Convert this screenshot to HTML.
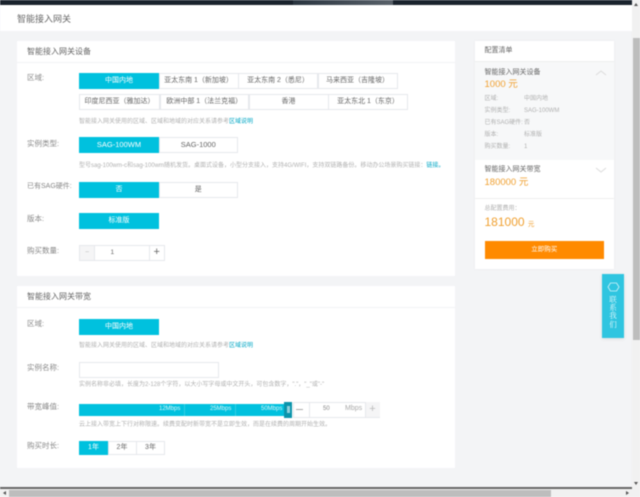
<!DOCTYPE html>
<html lang="zh"><head><meta charset="utf-8"><title>智能接入网关</title>
<style>
html,body{margin:0;padding:0;width:640px;height:497px;overflow:hidden;background:#f3f4f6}
body{position:relative;font-family:"Liberation Sans","Noto Sans CJK SC",sans-serif;color:#555}
#w{position:absolute;left:0;top:0;width:640px;height:497px;overflow:hidden;filter:blur(.45px)}
.a,.b,.t,.l,.h{position:absolute;box-sizing:border-box;white-space:nowrap}
.b{border:1px solid #e6e8ec;background:#fff;text-align:center;font-size:7px;line-height:14px;height:16px;color:#666}
.b.on{background:#00c1de;border-color:#00c1de;color:#fff}
.b.e{font-size:7.5px}
.l{left:27px;font-size:7.5px;line-height:10px;color:#888}
.h{left:79px;font-size:6px;line-height:8px;color:#b0b0b0}
.h i{font-style:normal;color:#00a6c4}
.t{font-size:8px;line-height:12px;color:#666}
.s{font-size:6px;line-height:9px;color:#b0b0b0}
.r{font-size:7px}
.p{font-size:9.5px;line-height:14px;color:#f0a030}
.m{font-size:6px;line-height:9px;color:#dff6fa}
</style></head><body><div id="w">
<div class="a" style="left:0;top:0;width:632px;height:5px;background:#1a232d"></div>
<div class="a" style="left:293px;top:0;width:100px;height:5px;background:linear-gradient(90deg,#2a3540,#59616a)"></div>
<div class="a" style="left:0;top:5px;width:632px;height:26px;background:#fff"></div>
<div class="t" style="left:17px;top:12.5px;font-size:9px">智能接入网关</div>

<div class="a" style="left:17px;top:41px;width:438px;height:235px;background:#fff"></div>
<div class="a" style="left:17px;top:61.5px;width:438px;height:1px;background:#f2f3f5"></div>
<div class="t" style="left:27px;top:45.5px">智能接入网关设备</div>
<div class="l" style="top:73px">区域:</div>
<div class="b on" style="left:79px;top:73px;width:80px">中国内地</div>
<div class="b" style="left:158.5px;top:73px;width:80px">亚太东南 1（新加坡）</div>
<div class="b" style="left:238px;top:73px;width:80px">亚太东南 2（悉尼）</div>
<div class="b" style="left:317.5px;top:73px;width:80px">马来西亚（吉隆坡）</div>
<div class="b" style="left:79px;top:94px;width:81px">印度尼西亚（雅加达）</div>
<div class="b" style="left:159.5px;top:94px;width:89.5px">欧洲中部 1（法兰克福）</div>
<div class="b" style="left:248.5px;top:94px;width:80px">香港</div>
<div class="b" style="left:328px;top:94px;width:80px">亚太东北 1（东京）</div>
<div class="h" style="top:118px">智能接入网关使用的区域、区域和地域的对应关系请参考<i>区域说明</i></div>
<div class="l" style="top:138.5px">实例类型:</div>
<div class="b on e" style="left:79px;top:137px;width:80px">SAG-100WM</div>
<div class="b e" style="left:158.5px;top:137px;width:79.5px">SAG-1000</div>
<div class="h" style="top:162px">型号sag-100wm-c和sag-100wm随机发货。桌面式设备，小型分支接入，支持4G/WIFI，支持双链路备份。移动办公场景购买链接：<i>链接。</i></div>
<div class="l" style="top:182px;font-size:7px">已有SAG硬件:</div>
<div class="b on" style="left:79px;top:181.5px;width:80px">否</div>
<div class="b" style="left:158.5px;top:181.5px;width:79.5px">是</div>
<div class="l" style="top:213.5px">版本:</div>
<div class="b on" style="left:79px;top:213px;width:80px">标准版</div>
<div class="l" style="top:245.5px">购买数量:</div>
<div class="b" style="left:79px;top:245px;width:86px"></div>
<div class="b" style="left:79px;top:245px;width:16px;background:#f5f5f6;color:#bbb;line-height:13px">−</div>
<div class="t" style="left:110.5px;top:247px;font-size:6.5px">1</div>
<div class="b" style="left:148.5px;top:245px;width:16.5px;font-size:11px;line-height:13px">+</div>

<div class="a" style="left:17px;top:286px;width:438px;height:181.5px;background:#fff"></div>
<div class="a" style="left:17px;top:307px;width:438px;height:1px;background:#f2f3f5"></div>
<div class="t" style="left:27px;top:290.5px">智能接入网关带宽</div>
<div class="l" style="top:318.5px">区域:</div>
<div class="b on" style="left:79px;top:318.5px;width:80px">中国内地</div>
<div class="h" style="top:342px">智能接入网关使用的区域、区域和地域的对应关系请参考<i>区域说明</i></div>
<div class="l" style="top:362.5px">实例名称:</div>
<div class="b" style="left:79px;top:362px;width:140px"></div>
<div class="h" style="top:381px">实例名称非必填，长度为2-128个字符，以大小写字母或中文开头，可包含数字，"."，"_"或"-"</div>
<div class="l" style="top:401.5px">带宽峰值:</div>
<div class="a" style="left:79px;top:403.5px;width:206px;height:12px;background:#00c1de"></div>
<div class="a" style="left:184px;top:403.5px;width:1px;height:12px;background:#33cde4"></div>
<div class="a" style="left:235px;top:403.5px;width:1px;height:12px;background:#33cde4"></div>
<div class="a m" style="left:159px;top:405px">12Mbps</div>
<div class="a m" style="left:210px;top:405px">25Mbps</div>
<div class="a m" style="left:261px;top:405px">50Mbps</div>
<div class="a" style="left:284px;top:401.5px;width:8px;height:16px;background:#0a94ab"></div>
<div class="a" style="left:286.5px;top:405.5px;width:3px;height:7px;background:#8fd0dc"></div>
<div class="b" style="left:293px;top:401.5px;width:87px;height:16px"></div>
<div class="a" style="left:296px;top:409px;width:7px;height:1px;background:#aaa"></div>
<div class="a" style="left:308.5px;top:402px;width:1px;height:15px;background:#e6e8ec"></div>
<div class="t" style="left:323px;top:405px;font-size:6px;line-height:9px;color:#888">50</div>
<div class="t" style="left:345px;top:404px;font-size:7px;line-height:10px;color:#aaa">Mbps</div>
<div class="a" style="left:364.5px;top:402px;width:15px;height:15px;background:#f5f5f6;border-left:1px solid #e6e8ec;color:#bbb;font-size:11px;line-height:14px;text-align:center">+</div>
<div class="h" style="top:421px">云上接入带宽上下行对称限速。续费变配时新带宽不是立即生效，而是在续费的周期开始生效。</div>
<div class="l" style="top:441px">购买时长:</div>
<div class="b on" style="left:79px;top:441px;width:29px;height:14px;line-height:12px">1年</div>
<div class="b" style="left:107.5px;top:441px;width:29px;height:14px;line-height:12px">2年</div>
<div class="b" style="left:136px;top:441px;width:29px;height:14px;line-height:12px">3年</div>

<div class="a" style="left:474.5px;top:41px;width:139.5px;height:228px;background:#fff;box-shadow:0 0 2px #e8e9ec"></div>
<div class="a" style="left:474.5px;top:61px;width:139.5px;height:98.5px;background:#f7f8f9;border-top:1px solid #eee"></div>
<div class="a" style="left:474.5px;top:198px;width:139.5px;height:1px;background:#eee"></div>
<div class="t r" style="left:484.5px;top:45px">配置清单</div>
<div class="t r" style="left:484.5px;top:67px">智能接入网关设备</div>
<div class="t p" style="left:484.5px;top:78px;color:#f0a030">1000 元</div>
<svg class="a" style="left:595px;top:70px" width="12" height="6"><path d="M1 5L6 1L11 5" fill="none" stroke="#dcdcdc"/></svg>
<div class="s a" style="left:484.5px;top:95px">区域:</div><div class="s a" style="left:524px;top:95px">中国内地</div>
<div class="s a" style="left:484.5px;top:107px">实例类型:</div><div class="s a" style="left:524px;top:107px">SAG-100WM</div>
<div class="s a" style="left:484.5px;top:119px">已有SAG硬件:</div><div class="s a" style="left:524px;top:119px">否</div>
<div class="s a" style="left:484.5px;top:131px">版本:</div><div class="s a" style="left:524px;top:131px">标准版</div>
<div class="s a" style="left:484.5px;top:143px">购买数量:</div><div class="s a" style="left:524px;top:143px">1</div>
<div class="t r" style="left:484.5px;top:164px">智能接入网关带宽</div>
<div class="t p" style="left:484.5px;top:176px;color:#f0a030">180000 元</div>
<svg class="a" style="left:595px;top:167px" width="12" height="6"><path d="M1 1L6 5L11 1" fill="none" stroke="#dcdcdc"/></svg>
<div class="s a" style="left:484.5px;top:204.5px">总配置费用：</div>
<div class="t" style="left:484.5px;top:213.5px;font-size:12px;line-height:17px;color:#f0a030">181000 <span style="font-size:6.5px">元</span></div>
<div class="a" style="left:484.5px;top:240.5px;width:119.5px;height:18px;background:#ff8a00;color:#fff;font-size:6.5px;line-height:18px;text-align:center">立即购买</div>

<div class="a" style="left:602px;top:274px;width:22px;height:64px;background:#2fc5e0;box-shadow:0 1px 3px #ddd"></div>
<svg class="a" style="left:606.5px;top:281.5px" width="13" height="10"><path d="M3.5 1H9.5L12 5L9.5 9H3.5L1 5Z" fill="none" stroke="#d5f4fa" stroke-width=".8" stroke-linejoin="round"/></svg>
<div class="a" style="left:602px;top:296px;width:22px;text-align:center;color:#eafafd;font-family:'Liberation Serif','Noto Serif CJK SC',serif;font-size:7.5px;line-height:8.2px;white-space:normal">联<br>系<br>我<br>们</div>

<div class="a" style="left:632px;top:0;width:8px;height:497px;background:#f1f1f1"></div>
<div class="a" style="left:632.5px;top:38px;width:7px;height:302px;background:#bdbdbd"></div>
<div class="a" style="left:634px;top:3px;width:0;height:0;border:2px solid transparent;border-top:0;border-bottom:3px solid #555"></div>
<div class="a" style="left:634px;top:482px;width:0;height:0;border:2px solid transparent;border-bottom:0;border-top:3px solid #555"></div>
<div class="a" style="left:0;top:487px;width:632px;height:2px;background:#666"></div>
<div class="a" style="left:0;top:489px;width:640px;height:8px;background:#f1f1f1"></div>
<div class="a" style="left:9px;top:489.5px;width:542px;height:7px;background:#bdbdbd"></div>
<div class="a" style="left:3px;top:491px;width:0;height:0;border:2px solid transparent;border-left:0;border-right:3px solid #555"></div>
<div class="a" style="left:626px;top:491px;width:0;height:0;border:2px solid transparent;border-right:0;border-left:3px solid #555"></div>
</div></body></html>
